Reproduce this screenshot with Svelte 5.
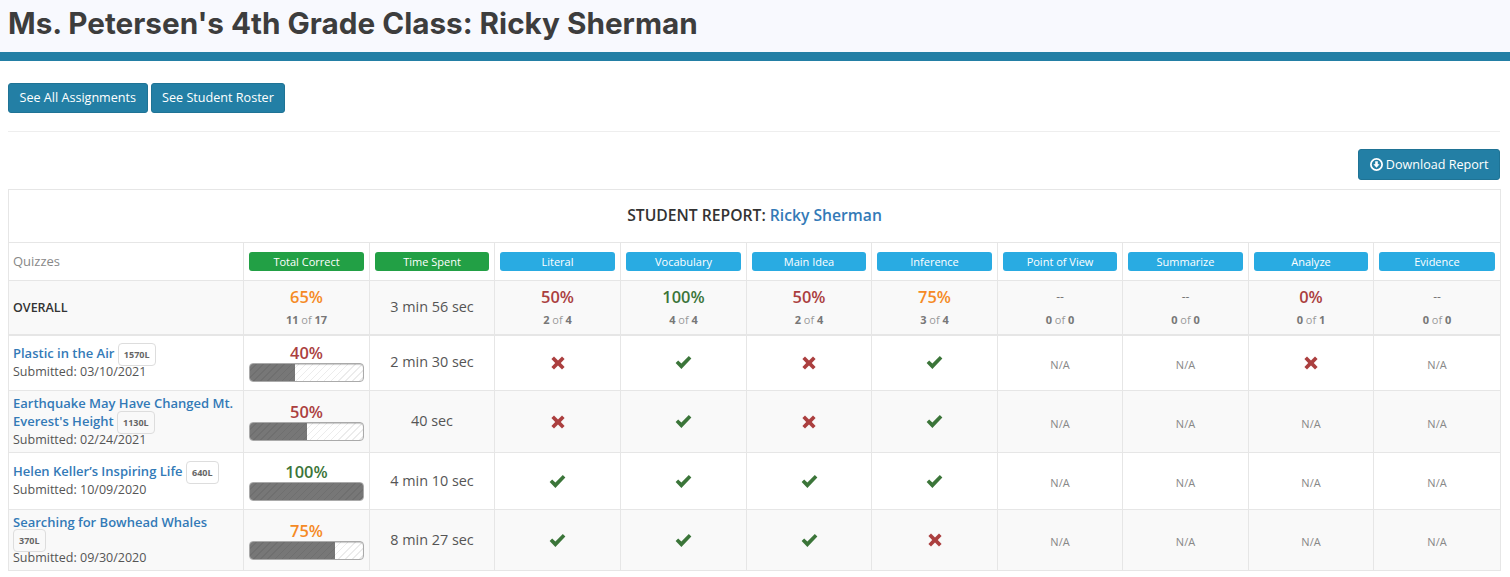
<script>
  const colWidths = [235, 126, 125, 126, 126, 125, 126, 125, 126, 125, 127];

  const skills = ['Literal', 'Vocabulary', 'Main Idea', 'Inference', 'Point of View', 'Summarize', 'Analyze', 'Evidence'];

  const overall = [
    { pct: 50, right: 2, total: 4 },
    { pct: 100, right: 4, total: 4 },
    { pct: 50, right: 2, total: 4 },
    { pct: 75, right: 3, total: 4 },
    { pct: null, right: 0, total: 0 },
    { pct: null, right: 0, total: 0 },
    { pct: 0, right: 0, total: 1 },
    { pct: null, right: 0, total: 0 }
  ];

  const quizzes = [
    { title: 'Plastic in the Air', level: '1570L', date: '03/10/2021', pct: 40, time: '2 min 30 sec', marks: [0, 1, 0, 1, null, null, 0, null], h: 56 },
    { title: "Earthquake May Have Changed Mt. Everest's Height", level: '1130L', date: '02/24/2021', pct: 50, time: '40 sec', marks: [0, 1, 0, 1, null, null, null, null], h: 62 },
    { title: 'Helen Keller’s Inspiring Life', level: '640L', date: '10/09/2020', pct: 100, time: '4 min 10 sec', marks: [1, 1, 1, 1, null, null, null, null], h: 57 },
    { title: 'Searching for Bowhead Whales', level: '370L', date: '09/30/2020', pct: 75, time: '8 min 27 sec', marks: [1, 1, 1, 0, null, null, null, null], h: 61 }
  ];

  function tone(pct) {
    if (pct >= 100) return 'good';
    if (pct >= 65) return 'warn';
    return 'bad';
  }
</script>

<header class="top">
  <h1>Ms. Petersen's 4th Grade Class: Ricky Sherman</h1>
</header>

<main class="page">
  <div class="actions">
    <button class="btn">See All Assignments</button>
    <button class="btn">See Student Roster</button>
  </div>
  <hr />
  <div class="download">
    <button class="btn">
      <svg class="dl" viewBox="0 0 14 14" width="13" height="13" aria-hidden="true">
        <path fill="currentColor" fill-rule="evenodd" d="M7 0a7 7 0 1 0 0 14A7 7 0 0 0 7 0zm0 1.9a5.1 5.1 0 1 1 0 10.2A5.1 5.1 0 0 1 7 1.9zM5.6 3.4v3.3H3.7L7 10.4l3.3-3.7H8.4V3.4z" />
      </svg>
      Download Report
    </button>
  </div>

  <table>
    <colgroup>
      {#each colWidths as w}
        <col style="width: {w}px" />
      {/each}
    </colgroup>
    <thead>
      <tr class="title-row">
        <th colspan="11">STUDENT REPORT: <a href="#top">Ricky Sherman</a></th>
      </tr>
      <tr class="head-row">
        <td class="quiz-head">Quizzes</td>
        <td><span class="pill green">Total Correct</span></td>
        <td><span class="pill green">Time Spent</span></td>
        {#each skills as skill}
          <td><span class="pill blue">{skill}</span></td>
        {/each}
      </tr>
    </thead>
    <tbody>
      <tr class="overall shaded">
        <td class="name"><strong>OVERALL</strong></td>
        <td>
          <div class="pct warn">65%</div>
          <div class="count"><b>11</b> of <b>17</b></div>
        </td>
        <td class="time">3 min 56 sec</td>
        {#each overall as o}
          <td>
            {#if o.pct === null}
              <div class="pct none">--</div>
            {:else}
              <div class="pct {tone(o.pct)}">{o.pct}%</div>
            {/if}
            <div class="count"><b>{o.right}</b> of <b>{o.total}</b></div>
          </td>
        {/each}
      </tr>
      {#each quizzes as q, i}
        <tr class:shaded={i % 2 === 1} style="height: {q.h}px">
          <td class="name">
            <a href="#top">{q.title}</a> <span class="level">{q.level}</span>
            <div class="sub">Submitted: {q.date}</div>
          </td>
          <td>
            <div class="pct small {tone(q.pct)}">{q.pct}%</div>
            <div class="bar"><div class="fill" style="width: {q.pct}%"></div></div>
          </td>
          <td class="time">{q.time}</td>
          {#each q.marks as m}
            <td>
              {#if m === null}
                <span class="na">N/A</span>
              {:else if m}
                <svg class="mark good" viewBox="0 0 16 14" width="17" height="15" aria-hidden="true">
                  <path fill="currentColor" d="M0.6 7.4 3 5l3 3 7-7.2 2.4 2.4L6 13z" />
                </svg>
              {:else}
                <svg class="mark bad" viewBox="0 0 14 14" width="14" height="14" aria-hidden="true">
                  <path fill="currentColor" d="M3 .6 7 4.4 11 .6 13.6 3 9.8 7l3.8 4L11 13.4 7 9.6l-4 3.8L.4 11l3.8-4L.4 3z" />
                </svg>
              {/if}
            </td>
          {/each}
        </tr>
      {/each}
    </tbody>
  </table>
</main>

<style>
  :global(body) {
    margin: 0;
    background: #fff;
    font-family: 'Open Sans', sans-serif;
    color: #444;
  }

  .top {
    height: 52px;
    background: #f8f9fe;
    border-bottom: 9px solid #237fa5;
    padding: 0 8px;
  }

  h1 {
    margin: 0;
    font-family: 'Inter', sans-serif;
    font-size: 29.7px;
    font-weight: 700;
    line-height: 46px;
    color: #3d3d3d;
    white-space: nowrap;
  }

  .page {
    padding: 22px 10px 0 8px;
  }

  .actions {
    display: flex;
    gap: 3px;
  }

  .btn {
    height: 30px;
    padding: 0 10.5px;
    background: #237fa5;
    border: 1px solid #1f7395;
    border-radius: 3px;
    color: #fff;
    font-family: 'Open Sans', sans-serif;
    font-size: 12.6px;
    line-height: 1;
  }

  hr {
    margin: 18px 0 17px;
    border: 0;
    border-top: 1px solid #eee;
  }

  .download {
    display: flex;
    justify-content: flex-end;
    margin-bottom: 9px;
  }

  .download .btn {
    height: 31px;
  }

  .dl {
    vertical-align: -2px;
  }

  table {
    width: 1492px;
    border-collapse: collapse;
    table-layout: fixed;
    font-size: 14px;
  }

  th,
  td {
    border: 1px solid #e6e6e6;
    padding: 0 5px;
    text-align: center;
    vertical-align: middle;
  }

  .title-row {
    height: 53px;
  }

  .title-row th {
    padding-bottom: 2px;
    font-size: 15.7px;
    font-weight: 600;
    color: #333;
  }

  a {
    color: #337ab7;
    text-decoration: none;
    font-weight: 600;
  }

  .head-row {
    height: 38px;
  }

  .quiz-head {
    padding-left: 4px;
    padding-bottom: 2px;
    text-align: left;
    font-size: 13px;
    color: #888;
  }

  .pill {
    display: block;
    height: 19px;
    border-radius: 3px;
    font-size: 11px;
    line-height: 19px;
    color: #fff;
  }

  .green {
    background: #22a045;
  }

  .blue {
    background: #29abe2;
  }

  .overall {
    height: 54px;
  }

  .shaded {
    background: #f9f9f9;
  }

  .overall td {
    border-bottom-width: 2px;
  }

  td.name {
    padding-left: 4px;
    text-align: left;
    font-size: 13px;
    line-height: 17.5px;
    color: #555;
  }

  .name strong {
    color: #333;
    font-weight: 600;
    font-size: 12.5px;
  }

  .sub {
    font-size: 12.5px;
  }

  .level {
    display: inline-block;
    margin: -3px 0;
    padding: 0 5px;
    border: 1px solid #ddd;
    border-radius: 4px;
    background: #fff;
    font-size: 9px;
    font-weight: 700;
    line-height: 21px;
    color: #666;
  }

  .shaded .level {
    background: #f9f9f9;
  }

  td.time {
    padding-bottom: 2px;
    font-size: 14.4px;
    color: #555;
  }

  .pct {
    font-size: 16.4px;
    font-weight: 600;
    line-height: 20px;
    margin: 0 0 5px;
  }

  .pct.small {
    margin: 0;
    line-height: 20px;
  }

  .pct.none {
    font-size: 12px;
    font-weight: 400;
    color: #777;
  }

  .good {
    color: #3b7539;
  }

  .warn {
    color: #f58a25;
  }

  .bad {
    color: #ab3f3f;
  }

  .count {
    font-size: 11px;
    line-height: 16px;
    color: #999;
  }

  .count b {
    color: #777;
  }

  .bar {
    height: 17px;
    border: 1px solid #aaa;
    border-radius: 4px;
    overflow: hidden;
    background: repeating-linear-gradient(135deg, #fff 0 4px, #ececec 4px 5px);
    box-shadow: inset 0 1px 1px rgba(0, 0, 0, 0.2);
  }

  .fill {
    height: 100%;
    background: repeating-linear-gradient(135deg, #777 0 4px, #6f6f6f 4px 5px);
  }

  .mark {
    display: block;
    margin: 0 auto;
  }

  .na {
    display: block;
    padding-top: 3px;
    font-size: 11px;
    color: #888;
  }
</style>
